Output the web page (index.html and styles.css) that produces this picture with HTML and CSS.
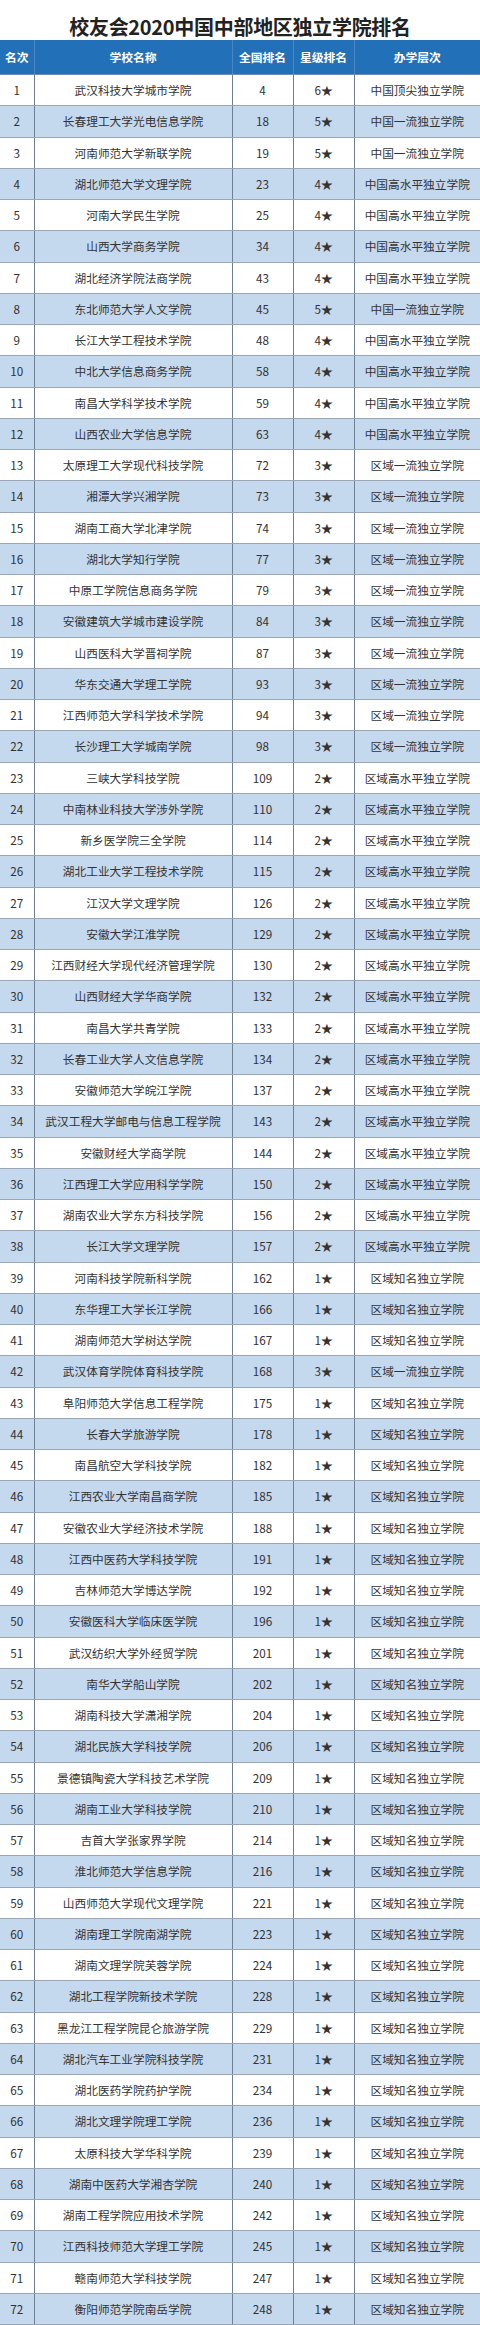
FILE: index.html
```html
<!DOCTYPE html>
<html lang="zh-CN">
<head>
<meta charset="utf-8">
<title>校友会2020中国中部地区独立学院排名</title>
<link rel="stylesheet" href="styles.css">
</head>
<body>
<div class="page">
<h1 class="title">校友会2020中国中部地区独立学院排名</h1>
<table class="rank">
<colgroup><col class="c1"><col class="c2"><col class="c3"><col class="c4"><col class="c5"></colgroup>
<thead><tr><th>名次</th><th>学校名称</th><th>全国排名</th><th>星级排名</th><th>办学层次</th></tr></thead>
<tbody>
<tr><td>1</td><td>武汉科技大学城市学院</td><td>4</td><td>6★</td><td>中国顶尖独立学院</td></tr>
<tr><td>2</td><td>长春理工大学光电信息学院</td><td>18</td><td>5★</td><td>中国一流独立学院</td></tr>
<tr><td>3</td><td>河南师范大学新联学院</td><td>19</td><td>5★</td><td>中国一流独立学院</td></tr>
<tr><td>4</td><td>湖北师范大学文理学院</td><td>23</td><td>4★</td><td>中国高水平独立学院</td></tr>
<tr><td>5</td><td>河南大学民生学院</td><td>25</td><td>4★</td><td>中国高水平独立学院</td></tr>
<tr><td>6</td><td>山西大学商务学院</td><td>34</td><td>4★</td><td>中国高水平独立学院</td></tr>
<tr><td>7</td><td>湖北经济学院法商学院</td><td>43</td><td>4★</td><td>中国高水平独立学院</td></tr>
<tr><td>8</td><td>东北师范大学人文学院</td><td>45</td><td>5★</td><td>中国一流独立学院</td></tr>
<tr><td>9</td><td>长江大学工程技术学院</td><td>48</td><td>4★</td><td>中国高水平独立学院</td></tr>
<tr><td>10</td><td>中北大学信息商务学院</td><td>58</td><td>4★</td><td>中国高水平独立学院</td></tr>
<tr><td>11</td><td>南昌大学科学技术学院</td><td>59</td><td>4★</td><td>中国高水平独立学院</td></tr>
<tr><td>12</td><td>山西农业大学信息学院</td><td>63</td><td>4★</td><td>中国高水平独立学院</td></tr>
<tr><td>13</td><td>太原理工大学现代科技学院</td><td>72</td><td>3★</td><td>区域一流独立学院</td></tr>
<tr><td>14</td><td>湘潭大学兴湘学院</td><td>73</td><td>3★</td><td>区域一流独立学院</td></tr>
<tr><td>15</td><td>湖南工商大学北津学院</td><td>74</td><td>3★</td><td>区域一流独立学院</td></tr>
<tr><td>16</td><td>湖北大学知行学院</td><td>77</td><td>3★</td><td>区域一流独立学院</td></tr>
<tr><td>17</td><td>中原工学院信息商务学院</td><td>79</td><td>3★</td><td>区域一流独立学院</td></tr>
<tr><td>18</td><td>安徽建筑大学城市建设学院</td><td>84</td><td>3★</td><td>区域一流独立学院</td></tr>
<tr><td>19</td><td>山西医科大学晋祠学院</td><td>87</td><td>3★</td><td>区域一流独立学院</td></tr>
<tr><td>20</td><td>华东交通大学理工学院</td><td>93</td><td>3★</td><td>区域一流独立学院</td></tr>
<tr><td>21</td><td>江西师范大学科学技术学院</td><td>94</td><td>3★</td><td>区域一流独立学院</td></tr>
<tr><td>22</td><td>长沙理工大学城南学院</td><td>98</td><td>3★</td><td>区域一流独立学院</td></tr>
<tr><td>23</td><td>三峡大学科技学院</td><td>109</td><td>2★</td><td>区域高水平独立学院</td></tr>
<tr><td>24</td><td>中南林业科技大学涉外学院</td><td>110</td><td>2★</td><td>区域高水平独立学院</td></tr>
<tr><td>25</td><td>新乡医学院三全学院</td><td>114</td><td>2★</td><td>区域高水平独立学院</td></tr>
<tr><td>26</td><td>湖北工业大学工程技术学院</td><td>115</td><td>2★</td><td>区域高水平独立学院</td></tr>
<tr><td>27</td><td>江汉大学文理学院</td><td>126</td><td>2★</td><td>区域高水平独立学院</td></tr>
<tr><td>28</td><td>安徽大学江淮学院</td><td>129</td><td>2★</td><td>区域高水平独立学院</td></tr>
<tr><td>29</td><td>江西财经大学现代经济管理学院</td><td>130</td><td>2★</td><td>区域高水平独立学院</td></tr>
<tr><td>30</td><td>山西财经大学华商学院</td><td>132</td><td>2★</td><td>区域高水平独立学院</td></tr>
<tr><td>31</td><td>南昌大学共青学院</td><td>133</td><td>2★</td><td>区域高水平独立学院</td></tr>
<tr><td>32</td><td>长春工业大学人文信息学院</td><td>134</td><td>2★</td><td>区域高水平独立学院</td></tr>
<tr><td>33</td><td>安徽师范大学皖江学院</td><td>137</td><td>2★</td><td>区域高水平独立学院</td></tr>
<tr><td>34</td><td>武汉工程大学邮电与信息工程学院</td><td>143</td><td>2★</td><td>区域高水平独立学院</td></tr>
<tr><td>35</td><td>安徽财经大学商学院</td><td>144</td><td>2★</td><td>区域高水平独立学院</td></tr>
<tr><td>36</td><td>江西理工大学应用科学学院</td><td>150</td><td>2★</td><td>区域高水平独立学院</td></tr>
<tr><td>37</td><td>湖南农业大学东方科技学院</td><td>156</td><td>2★</td><td>区域高水平独立学院</td></tr>
<tr><td>38</td><td>长江大学文理学院</td><td>157</td><td>2★</td><td>区域高水平独立学院</td></tr>
<tr><td>39</td><td>河南科技学院新科学院</td><td>162</td><td>1★</td><td>区域知名独立学院</td></tr>
<tr><td>40</td><td>东华理工大学长江学院</td><td>166</td><td>1★</td><td>区域知名独立学院</td></tr>
<tr><td>41</td><td>湖南师范大学树达学院</td><td>167</td><td>1★</td><td>区域知名独立学院</td></tr>
<tr><td>42</td><td>武汉体育学院体育科技学院</td><td>168</td><td>3★</td><td>区域一流独立学院</td></tr>
<tr><td>43</td><td>阜阳师范大学信息工程学院</td><td>175</td><td>1★</td><td>区域知名独立学院</td></tr>
<tr><td>44</td><td>长春大学旅游学院</td><td>178</td><td>1★</td><td>区域知名独立学院</td></tr>
<tr><td>45</td><td>南昌航空大学科技学院</td><td>182</td><td>1★</td><td>区域知名独立学院</td></tr>
<tr><td>46</td><td>江西农业大学南昌商学院</td><td>185</td><td>1★</td><td>区域知名独立学院</td></tr>
<tr><td>47</td><td>安徽农业大学经济技术学院</td><td>188</td><td>1★</td><td>区域知名独立学院</td></tr>
<tr><td>48</td><td>江西中医药大学科技学院</td><td>191</td><td>1★</td><td>区域知名独立学院</td></tr>
<tr><td>49</td><td>吉林师范大学博达学院</td><td>192</td><td>1★</td><td>区域知名独立学院</td></tr>
<tr><td>50</td><td>安徽医科大学临床医学院</td><td>196</td><td>1★</td><td>区域知名独立学院</td></tr>
<tr><td>51</td><td>武汉纺织大学外经贸学院</td><td>201</td><td>1★</td><td>区域知名独立学院</td></tr>
<tr><td>52</td><td>南华大学船山学院</td><td>202</td><td>1★</td><td>区域知名独立学院</td></tr>
<tr><td>53</td><td>湖南科技大学潇湘学院</td><td>204</td><td>1★</td><td>区域知名独立学院</td></tr>
<tr><td>54</td><td>湖北民族大学科技学院</td><td>206</td><td>1★</td><td>区域知名独立学院</td></tr>
<tr><td>55</td><td>景德镇陶瓷大学科技艺术学院</td><td>209</td><td>1★</td><td>区域知名独立学院</td></tr>
<tr><td>56</td><td>湖南工业大学科技学院</td><td>210</td><td>1★</td><td>区域知名独立学院</td></tr>
<tr><td>57</td><td>吉首大学张家界学院</td><td>214</td><td>1★</td><td>区域知名独立学院</td></tr>
<tr><td>58</td><td>淮北师范大学信息学院</td><td>216</td><td>1★</td><td>区域知名独立学院</td></tr>
<tr><td>59</td><td>山西师范大学现代文理学院</td><td>221</td><td>1★</td><td>区域知名独立学院</td></tr>
<tr><td>60</td><td>湖南理工学院南湖学院</td><td>223</td><td>1★</td><td>区域知名独立学院</td></tr>
<tr><td>61</td><td>湖南文理学院芙蓉学院</td><td>224</td><td>1★</td><td>区域知名独立学院</td></tr>
<tr><td>62</td><td>湖北工程学院新技术学院</td><td>228</td><td>1★</td><td>区域知名独立学院</td></tr>
<tr><td>63</td><td>黑龙江工程学院昆仑旅游学院</td><td>229</td><td>1★</td><td>区域知名独立学院</td></tr>
<tr><td>64</td><td>湖北汽车工业学院科技学院</td><td>231</td><td>1★</td><td>区域知名独立学院</td></tr>
<tr><td>65</td><td>湖北医药学院药护学院</td><td>234</td><td>1★</td><td>区域知名独立学院</td></tr>
<tr><td>66</td><td>湖北文理学院理工学院</td><td>236</td><td>1★</td><td>区域知名独立学院</td></tr>
<tr><td>67</td><td>太原科技大学华科学院</td><td>239</td><td>1★</td><td>区域知名独立学院</td></tr>
<tr><td>68</td><td>湖南中医药大学湘杏学院</td><td>240</td><td>1★</td><td>区域知名独立学院</td></tr>
<tr><td>69</td><td>湖南工程学院应用技术学院</td><td>242</td><td>1★</td><td>区域知名独立学院</td></tr>
<tr><td>70</td><td>江西科技师范大学理工学院</td><td>245</td><td>1★</td><td>区域知名独立学院</td></tr>
<tr><td>71</td><td>赣南师范大学科技学院</td><td>247</td><td>1★</td><td>区域知名独立学院</td></tr>
<tr><td>72</td><td>衡阳师范学院南岳学院</td><td>248</td><td>1★</td><td>区域知名独立学院</td></tr>
</tbody>
</table>
</div>
</body>
</html>
```
FILE: styles.css
```css
html, body {
  margin: 0;
  padding: 0;
  background: #ffffff;
}
body {
  font-family: "Noto Sans CJK SC", "Noto Sans", sans-serif;
  color: #333333;
}
.page {
  width: 480px;
}
.title {
  margin: 0;
  height: 40px;
  box-sizing: border-box;
  padding-top: 14px;
  font-size: 20px;
  line-height: 26px;
  font-weight: 700;
  text-align: center;
  color: #222222;
  letter-spacing: -0.3px;
}
.rank {
  width: 480px;
  table-layout: fixed;
  border-collapse: collapse;
}
.c1 { width: 34px; }
.c2 { width: 198px; }
.c3 { width: 61px; }
.c4 { width: 61px; }
.c5 { width: 126px; }
.rank th {
  height: 34px;
  padding: 0;
  line-height: 16px;
  background: #2270b8;
  color: #ffffff;
  font-size: 11.8px;
  font-weight: 700;
  text-align: center;
  border-left: 1px solid #4b86c0;
  border-bottom: 1px solid #6d8fb3;
}
.rank th:first-child,
.rank td:first-child {
  border-left: none;
}
.rank td {
  height: 30.25px;
  padding: 0;
  line-height: 16px;
  font-size: 11.7px;
  text-align: center;
  white-space: nowrap;
  border-left: 1px solid #6f7f94;
  border-bottom: 1px solid #9aa6b6;
}
.rank tbody tr:nth-child(even) td {
  background: #c4d8ee;
}
```
